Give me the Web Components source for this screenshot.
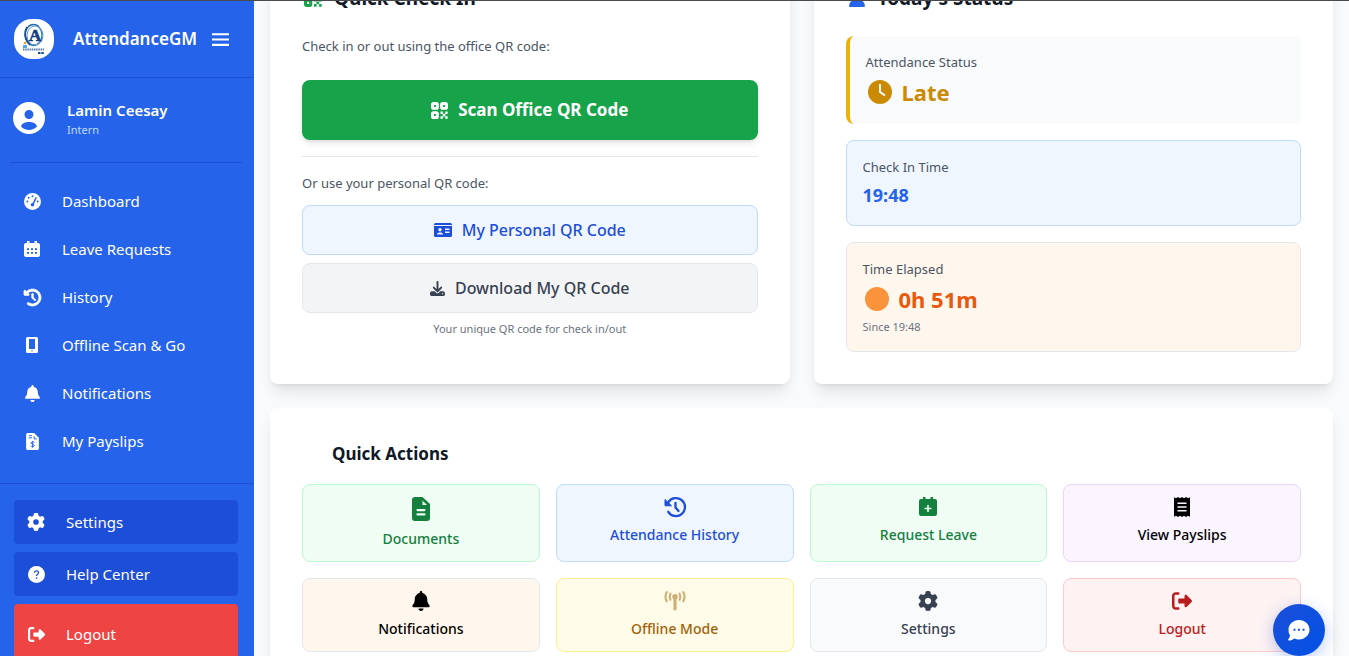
<!DOCTYPE html>
<html lang="en">
<head>
<meta charset="utf-8">
<title>AttendanceGM</title>
<style>
html,body{margin:0;height:100%}
body{box-sizing:border-box;border-top:1px solid #4a4a4d;background:#f9fafb;font-family:"Noto Sans","Open Sans",sans-serif;font-size:13px;line-height:20px;color:#4b5563;overflow:hidden}
</style>
</head>
<body>
<attendance-app></attendance-app>
<script>
const ICONS = {
  qr: '<path fill-rule="evenodd" d="M4 0h4a4 4 0 0 1 4 4v4a4 4 0 0 1-4 4H4a4 4 0 0 1-4-4V4a4 4 0 0 1 4-4zm.500 4.500v3h3v-3zM18 0h4a4 4 0 0 1 4 4v4a4 4 0 0 1-4 4h-4a4 4 0 0 1-4-4V4a4 4 0 0 1 4-4zm.500 4.500v3h3v-3zM4 14h4a4 4 0 0 1 4 4v4a4 4 0 0 1-4 4H4a4 4 0 0 1-4-4v-4a4 4 0 0 1 4-4zm.500 4.500v3h3v-3zM14.500 14.500h3.700v3.700h-3.700zM21.800 14.500h3.700v3.700h-3.700zM18 18h4v4h-4zM14.500 21.800h3.700v3.700h-3.700zM21.800 21.800h3.700v3.700h-3.700z"/>|0 0 26 26',
  user: '<path d="M224 256a128 128 0 1 0 0-256 128 128 0 1 0 0 256zm-45.700 48C79.800 304 0 383.800 0 482.300 0 498.700 13.300 512 29.700 512h388.600c16.400 0 29.700-13.300 29.700-29.700C448 383.800 368.200 304 269.700 304z"/>|0 0 448 512',
  avatar: '<path fill-rule="evenodd" d="M16 0a16 16 0 1 1 0 32 16 16 0 0 1 0-32zm0 8a4 4 0 1 0 0 9 4 4 0 0 0 0-9zM8 24.500C10 26.500 13 28 16 28s6-1.500 8-3.500C23 21 19.500 20 16 20s-7 1-8 4.500z"/>|0 0 32 32',
  menu: '<path d="M0 2h16v2H0zM0 7h16v2H0zM0 12h16v2H0z"/>|0 0 16 16',
  gauge: '<circle cx="9" cy="9" r="9"/><g fill="#2563eb"><circle cx="9" cy="3.500" r="1"/><circle cx="5" cy="5" r="1"/><circle cx="3.500" cy="9" r="1"/><circle cx="14.500" cy="9" r="1"/><circle cx="9" cy="12.500" r="1.900"/><path d="M12.500 4.300l1.200.6-3.800 8-1.600-.8z"/></g>|0 0 18 18',
  calendar: '<path fill-rule="evenodd" d="M3 0h2.500v2h5V0H13v2h1a2 2 0 0 1 2 2v10a2 2 0 0 1-2 2H2a2 2 0 0 1-2-2V4a2 2 0 0 1 2-2h1zM3 7.300v1.700h2V7.300zm4 0v1.700h2V7.300zm4 0v1.700h2V7.300zM3 11v1.700h2V11zm4 0v1.700h2V11zm4 0v1.700h2V11z"/>|0 0 16 16',
  history: '<path stroke="currentColor" stroke-width="22" d="M75 75L41 41C25.900 25.900 0 36.600 0 57.900V168c0 13.300 10.700 24 24 24h110.100c21.400 0 32.100-25.900 17-41l-30.800-30.800C155 85.500 203 64 256 64c106 0 192 86 192 192s-86 192-192 192c-40.800 0-78.600-12.700-109.700-34.400c-14.500-10.100-34.400-6.600-44.600 7.900s-6.600 34.400 7.900 44.600C151.200 495 201.700 512 256 512c141.400 0 256-114.600 256-256S397.400 0 256 0C185.300 0 121.300 28.700 75 75zm181 53c-13.300 0-24 10.700-24 24v104c0 6.400 2.500 12.500 7 17l72 72c9.400 9.400 24.600 9.400 33.900 0s9.400-24.600 0-33.900l-65-65V152c0-13.300-10.700-24-24-24z"/>|0 0 512 512',
  historyThin: '<g fill="none" stroke="currentColor" stroke-width="2.300" stroke-linecap="round"><path d="M3.200 5.500A9 9 0 1 1 3.300 14.800"/><path d="M10.500 5.800v4.700l3 3.500"/></g><path d="M0 2.500v6.300h6.500z" stroke="currentColor" stroke-linejoin="round"/>|0 0 20 20',
  mobile: '<path fill-rule="evenodd" d="M3.500 0h9A1.500 1.500 0 0 1 14 1.500v13a1.500 1.500 0 0 1-1.500 1.500h-9A1.500 1.500 0 0 1 2 14.500v-13A1.500 1.500 0 0 1 3.500 0zM5 2v10h6V2zM7.500 13v1.500h1V13z"/>|0 0 16 16',
  bell: '<path d="M224 0c-17.700 0-32 14.300-32 32v19.200C119 66 64 130.600 64 208v18.800c0 47-17.300 92.400-48.500 127.600l-7.400 8.300c-8.400 9.400-10.400 22.900-5.300 34.400S19.400 416 32 416h384c12.600 0 24-7.400 29.200-18.900s3.100-25-5.300-34.400l-7.400-8.300C401.300 319.200 384 273.900 384 226.800V208c0-77.400-55-142-128-156.800V32c0-17.700-14.300-32-32-32zm45.300 493.300c12-12 18.700-28.300 18.700-45.300H160c0 17 6.700 33.300 18.700 45.300S207 512 224 512s33.300-6.700 45.300-18.700z"/>|0 0 448 512',
  invoice: '<path d="M3.500 0H9.500L14 4.500v10a1.500 1.500 0 0 1-1.500 1.500h-9A1.500 1.500 0 0 1 2 14.500v-13A1.500 1.500 0 0 1 3.500 0z"/><g stroke="#2563eb" fill="none"><path d="M4.500 2.500h3M4.500 4.500h3M9.500 3v2.500h2.500" stroke-width=".9"/><path d="M9.800 8.900C9 8.200 6.500 8.100 6.500 9.500s3.200 1 3.200 2.300-2.500 1.300-3.400.5M8.100 7.600v6.200" stroke-width=".9"/></g>|0 0 16 16',
  gear: '<path d="M495.900 166.600c3.200 8.700 .5 18.400-6.400 24.600l-43.300 39.400c1.100 8.300 1.700 16.800 1.700 25.400s-.6 17.100-1.700 25.400l43.300 39.400c6.900 6.200 9.600 15.900 6.400 24.600c-4.400 11.900-9.700 23.300-15.800 34.300l-4.700 8.100c-6.600 11-14 21.400-22.100 31.200c-5.900 7.200-15.700 9.600-24.500 6.800l-55.700-17.700c-13.400 10.300-28.200 18.900-44 25.400l-12.500 57.100c-2 9.100-9 16.300-18.200 17.800c-13.800 2.300-28 3.500-42.500 3.500s-28.700-1.200-42.500-3.500c-9.200-1.500-16.200-8.700-18.200-17.800l-12.500-57.100c-15.800-6.500-30.600-15.100-44-25.400L83.100 425.900c-8.800 2.800-18.600 .3-24.500-6.800c-8.100-9.800-15.500-20.200-22.100-31.200l-4.700-8.100c-6.100-11-11.400-22.400-15.800-34.300c-3.200-8.700-.5-18.400 6.400-24.600l43.300-39.400C64.600 273.100 64 264.600 64 256s.6-17.100 1.700-25.400L22.400 191.200c-6.900-6.200-9.600-15.900-6.400-24.600c4.400-11.900 9.700-23.300 15.800-34.300l4.700-8.100c6.600-11 14-21.400 22.100-31.200c5.900-7.200 15.700-9.600 24.500-6.800l55.700 17.700c13.400-10.300 28.200-18.900 44-25.400l12.500-57.100c2-9.100 9-16.300 18.200-17.800C227.300 1.200 241.500 0 256 0s28.700 1.200 42.500 3.500c9.200 1.500 16.200 8.700 18.200 17.800l12.500 57.100c15.800 6.500 30.600 15.100 44 25.400l55.700-17.700c8.800-2.800 18.600-.3 24.500 6.800c8.100 9.800 15.500 20.200 22.100 31.200l4.700 8.100c6.100 11 11.400 22.400 15.800 34.300zM256 336a80 80 0 1 0 0-160 80 80 0 1 0 0 160z"/>|0 0 512 512',
  help: '<circle cx="9" cy="9" r="9"/><path d="M6.800 7.200C6.900 4.500 11.200 4.600 11.200 7c0 1.700-2.200 1.600-2.200 3.500" fill="none" stroke="#1d4ed8" stroke-width="1.300"/><circle cx="9" cy="12.700" r=".9" fill="#1d4ed8"/>|0 0 18 18',
  logout: '<path d="M377.900 105.900L500.700 228.700c7.200 7.200 11.300 17.100 11.300 27.300s-4.100 20.100-11.300 27.300L377.900 406.100c-6.400 6.400-15 9.900-24 9.900c-18.700 0-33.900-15.200-33.900-33.900V320H192c-17.700 0-32-14.300-32-32v-64c0-17.700 14.300-32 32-32h128v-62.100c0-18.700 15.200-33.900 33.900-33.900c9 0 17.600 3.600 24 9.900zM160 96H96c-17.700 0-32 14.300-32 32v256c0 17.700 14.300 32 32 32h64c17.700 0 32 14.300 32 32s-14.300 32-32 32H96c-53 0-96-43-96-96V128C0 75 43 32 96 32h64c17.700 0 32 14.300 32 32s-14.300 32-32 32z"/>|0 0 512 512',
  idcard: '<path fill-rule="evenodd" d="M1.500 0h15A1.500 1.500 0 0 1 18 1.500V2H0v-.5A1.500 1.500 0 0 1 1.500 0zM0 3h18v9.500a1.500 1.500 0 0 1-1.500 1.500h-15A1.500 1.500 0 0 1 0 12.500zm6 2a1.700 1.700 0 1 0 0 3.400A1.700 1.700 0 0 0 6 5zM3 11.600h6C9 9.800 7.500 9.400 6 9.400s-3 .4-3 2.200zM11 5.500V7h4.500V5.500zm0 3V10h4.500V8.500z"/>|0 0 18 14',
  download: '<path fill-rule="evenodd" d="M288 32c0-17.700-14.300-32-32-32s-32 14.300-32 32v242.700l-73.400-73.400c-12.500-12.500-32.800-12.500-45.300 0s-12.500 32.800 0 45.300l128 128c12.500 12.500 32.800 12.500 45.300 0l128-128c12.500-12.500 12.500-32.800 0-45.300s-32.800-12.500-45.300 0L288 274.700V32zM64 352c-35.300 0-64 28.700-64 64v32c0 35.300 28.700 64 64 64h384c35.300 0 64-28.700 64-64v-32c0-35.300-28.700-64-64-64H346.500l-45.300 45.300c-25 25-65.500 25-90.500 0L165.500 352H64zm368 56a24 24 0 1 1 0 48 24 24 0 1 1 0-48z"/>|0 0 512 512',
  clock: '<path fill-rule="evenodd" d="M12 0a12 12 0 1 1 0 24 12 12 0 0 1 0-24zm-1 5v7.500l5 3.500c1 .4 2-.8 1-1.700l-4-2.800V5c0-1.300-2-1.300-2 0z"/>|0 0 24 24',
  dot: '<circle cx="12" cy="12" r="12"/>|0 0 24 24',
  doc: '<path fill-rule="evenodd" d="M3 0h7.500L18 7v14a3 3 0 0 1-3 3H3a3 3 0 0 1-3-3V3a3 3 0 0 1 3-3zm7.500 3.500V8H15zM5.500 12a1 1 0 0 0 0 2.200h7a1 1 0 0 0 0-2.200zm0 4.300a1 1 0 0 0 0 2.200h7a1 1 0 0 0 0-2.200z"/>|0 0 18 24',
  calplus: '<path fill-rule="evenodd" d="M4 0h2.500v2h5V0H14v2h2a2 2 0 0 1 2 2v13a2 2 0 0 1-2 2H2a2 2 0 0 1-2-2V4a2 2 0 0 1 2-2h2zM8.200 8v2.700H5.500v1.500h2.700v2.700h1.600v-2.700h2.700v-1.500H9.800V8z"/>|0 0 18 20',
  receipt: '<path fill-rule="evenodd" d="M0 .3l2 1L4 0l2 1.300L8 0l2 1.300L12 0l2 1.300 2-1v19.400l-2-1L12 20l-2-1.300L8 20l-2-1.300L4 20l-2-1.300-2 1zM3.500 5.500V7h9V5.500zm0 3.700v1.600h9V9.200zm0 3.800v1.500h9V13z"/>|0 0 16 20',
  tower: '<circle cx="11" cy="6" r="2.900"/><path d="M9.400 6h3.200v13a1.600 1.600 0 0 1-3.200 0z"/><g fill="none" stroke="currentColor" stroke-width="2.200" stroke-linecap="round"><path d="M2.300 1.200Q-.2 6 2.300 10.800M19.700 1.200Q22.200 6 19.700 10.800M6.200 2.800Q4.700 6 6.200 9.200M15.800 2.800Q17.300 6 15.800 9.200"/></g>|0 0 22 21',
  chat: '<path fill-rule="evenodd" d="M11 0c5.800 0 10.500 4.300 10.500 9.700S16.800 19.400 11 19.400c-1.700 0-3.300-.4-4.700-1C4.800 19.600 2.800 20.500.8 20.500c-.8 0-1-.7-.5-1.200 1-1 1.700-2.700 1.700-4A9.300 9.300 0 0 1 .5 9.700C.5 4.300 5.200 0 11 0zM5.500 8.700v2h2v-2zm4.500 0v2h2v-2zm4.500 0v2h2v-2z"/>|0 0 22 21'
};

class Base extends HTMLElement {
  connectedCallback() {
    if (this.shadowRoot) return;
    this.attachShadow({mode: 'open'}).innerHTML = '<style>*{box-sizing:border-box}:host{display:block;box-sizing:border-box}' + this.css() + '</style>' + this.html();
  }
  a(name, fallback = '') { return this.getAttribute(name) || fallback; }
}

customElements.define('app-icon', class extends Base {
  css() {
    const w = this.a('w', '17'), h = this.a('h', w);
    return `:host{display:block;flex:none}svg{display:block;width:${w}px;height:${h}px;fill:currentColor;overflow:visible}`;
  }
  html() {
    const [body, box] = ICONS[this.a('name')].split('|');
    return `<svg viewBox="${box}" aria-hidden="true">${body}</svg>`;
  }
});

customElements.define('brand-logo', class extends Base {
  css() { return `:host{flex:none}svg{display:block;width:40px;height:40px}text{font-family:"Liberation Serif",serif;font-weight:700;fill:#123f7f;stroke:#123f7f;stroke-width:.6}`; }
  html() {
    return `<svg viewBox="0 0 40 40" role="img" aria-label="AttendanceGM logo"><rect width="40" height="40" rx="18" fill="#fff"/>
      <ellipse cx="19.500" cy="16" rx="8.500" ry="10.500" fill="none" stroke="#2b6cb0" stroke-width="1.300"/>
      <ellipse cx="21" cy="16.500" rx="8" ry="9.500" fill="none" stroke="#5a9bd5" stroke-width="1"/>
      <path d="M13 8Q8 17 16 26" fill="none" stroke="#1c4f8f" stroke-width="1.800"/>
      <text x="15" y="22" font-size="17">A</text>
      <circle cx="11" cy="24" r="1.300" fill="#f0a030"/><path d="M9 26h4v3H9z" fill="#5aa7d8"/>
      <path d="M9 30.500h21" stroke="#1c4f8f" stroke-width="1.800" stroke-dasharray="1.500 .7" opacity=".75"/>
      <path d="M24 34h6" stroke="#1c4f8f" stroke-width="2" stroke-dasharray="2.500 .8"/></svg>`;
  }
});

customElements.define('nav-item', class extends Base {
  css() {
    return `a{display:flex;align-items:center;gap:20px;height:48px;padding-left:22px;color:#fff;text-decoration:none;font-size:15px;line-height:24px}
      span{width:20px;display:flex;justify-content:center}
      :host([boxed]) a{height:44px;padding-left:12px;background:#1d4ed8;border-radius:4px}
      :host([danger]) a{height:60px;background:#ef4444}`;
  }
  html() { return `<a href="#"><span><app-icon name="${this.a('icon')}" w="${this.a('w', '17')}"></app-icon></span><slot></slot></a>`; }
});

customElements.define('app-sidebar', class extends Base {
  css() {
    return `:host{flex:none;width:254px;background:#2563eb;color:#fff}
      header{display:flex;align-items:center;height:77px;padding-left:14px;border-bottom:1px solid #1d4ed8}
      h1{margin:0 0 0 19px;font-size:17px;line-height:28px;font-weight:600}
      button{margin:0 0 0 15px;padding:0;border:0;background:none;color:inherit}
      .me{display:flex;align-items:center;gap:22px;margin:0 12px 0 10px;padding:20px 0 24px 3px;border-bottom:1px solid #1d4ed8}
      .me b{display:block;font-size:15px;line-height:24px;font-weight:600}
      .me small{display:block;font-size:11px;line-height:16px;color:#bfdbfe}
      nav{padding:14px 0 18px}
      footer{display:grid;gap:8px;padding:16px 16px 16px 14px;border-top:1px solid #1d4ed8}`;
  }
  html() {
    return `<header><brand-logo></brand-logo><h1>AttendanceGM</h1><button aria-label="Toggle menu"><app-icon name="menu" w="17"></app-icon></button></header>
      <div class="me"><app-icon name="avatar" w="32"></app-icon><div><b>Lamin Ceesay</b><small>Intern</small></div></div>
      <nav><nav-item icon="gauge">Dashboard</nav-item><nav-item icon="calendar" w="16">Leave Requests</nav-item><nav-item icon="history">History</nav-item>
      <nav-item icon="mobile" w="16">Offline Scan &amp; Go</nav-item><nav-item icon="bell" w="17">Notifications</nav-item><nav-item icon="invoice" w="17">My Payslips</nav-item></nav>
      <footer><nav-item boxed icon="gear" w="18">Settings</nav-item><nav-item boxed icon="help">Help Center</nav-item><nav-item boxed danger icon="logout">Logout</nav-item></footer>`;
  }
});

customElements.define('panel-card', class extends Base {
  css() {
    return `:host{background:#fff;border-radius:8px;padding:32px;box-shadow:0 10px 15px -3px rgba(0,0,0,.1),0 4px 6px -4px rgba(0,0,0,.1)}
      h2{display:flex;align-items:center;gap:12px;margin:0 0 24px;padding-left:2px;font-size:19px;line-height:28px;font-weight:700;color:#111827}
      :host([plain]) h2{margin-bottom:16px;padding-left:30px;font-size:17px}`;
  }
  html() {
    const i = this.a('icon');
    return `<h2>${i ? `<app-icon name="${i}" w="18" style="color:${this.a('tint')}"></app-icon>` : ''}${this.a('heading')}</h2><slot></slot>`;
  }
});

customElements.define('wide-button', class extends Base {
  css() {
    return `button{display:flex;align-items:center;justify-content:center;gap:10px;width:100%;height:50px;padding:0;border:1px solid #e5e7eb;border-radius:8px;background:#f3f4f6;color:#374151;font:500 16px/24px "Noto Sans",sans-serif}
      :host([kind=blue]) button{background:#eff6ff;border-color:#bfdbfe;color:#1d4ed8}
      :host([kind=green]) button{height:60px;border:0;background:#16a34a;color:#fff;font-size:17px;font-weight:700;box-shadow:0 4px 6px -1px rgba(0,0,0,.1),0 2px 4px -2px rgba(0,0,0,.1)}`;
  }
  html() { return `<button><app-icon name="${this.a('icon')}" w="${this.a('w')}" h="${this.a('h', this.a('w'))}"></app-icon><slot></slot></button>`; }
});

customElements.define('check-in-panel', class extends Base {
  css() {
    return `p{margin:0}.a{margin-bottom:24px}.more{margin-top:16px;padding-top:16px;border-top:1px solid #e5e7eb}.more p{margin-bottom:12px}
      .list{display:grid;gap:8px}.more .note{margin:0;text-align:center;font-size:11px;line-height:16px;color:#6b7280}`;
  }
  html() {
    return `<p class="a">Check in or out using the office QR code:</p><wide-button kind="green" icon="qr" w="17">Scan Office QR Code</wide-button>
      <div class="more"><p>Or use your personal QR code:</p><div class="list"><wide-button kind="blue" icon="idcard" w="18" h="14">My Personal QR Code</wide-button>
      <wide-button icon="download" w="15">Download My QR Code</wide-button><p class="note">Your unique QR code for check in/out</p></div></div>`;
  }
});

customElements.define('status-tile', class extends Base {
  css() {
    return `:host{padding:16px;border:1px solid #bfdbfe;border-radius:8px;background:#eff6ff}
      .v{display:flex;align-items:center;gap:10px;margin-top:4px;font-size:18px;line-height:28px;font-weight:700;color:#2563eb}
      :host([kind=late]){border:0;border-left:4px solid #eab308;background:#f9fafb}
      :host([kind=elapsed]){border-color:#e5e7eb;background:#fff7ed}
      :host([kind]) .v{padding-left:2px;font-size:22px;line-height:32px}
      :host([kind=late]) .v{color:#ca8a04}:host([kind=elapsed]) .v{color:#ea580c}
      small{display:block;margin-top:4px;font-size:11px;line-height:16px;color:#6b7280}`;
  }
  html() {
    const i = this.a('icon'), n = this.a('note');
    return `<div>${this.a('label')}</div><div class="v">${i ? `<app-icon name="${i}" w="24"${i === 'dot' ? ' style="color:#fb923c"' : ''}></app-icon>` : ''}<slot></slot></div>${n ? `<small>${n}</small>` : ''}`;
  }
});

customElements.define('action-tile', class extends Base {
  css() {
    return `:host{display:grid}a{display:flex;flex-direction:column;align-items:center;gap:8px;padding:12px;border:1px solid ${this.a('line', '#e5e7eb')};border-radius:8px;background:${this.a('fill')};color:${this.a('ink', '#000')};font-size:14px;font-weight:500;line-height:20px;text-decoration:none}
      :host([faded]) app-icon{opacity:.5}`;
  }
  html() { return `<a href="#"><app-icon name="${this.a('icon')}" w="22" h="${this.a('h', '20')}"></app-icon><slot></slot></a>`; }
});

customElements.define('chat-button', class extends Base {
  css() {
    return `:host{position:fixed;right:24px;bottom:0}
      button{display:grid;place-items:center;width:52px;height:52px;padding:0;border:0;border-radius:50%;color:#fff;background:linear-gradient(135deg,#1d4ed8,#0052e6);box-shadow:0 4px 16px rgba(29,78,216,.3)}`;
  }
  html() { return `<button aria-label="Open chat"><app-icon name="chat" w="22" h="21"></app-icon></button>`; }
});

customElements.define('attendance-app', class extends Base {
  css() {
    return `:host{display:flex;height:100%;overflow:hidden}
      main{flex:1;min-width:0;padding:0 16px;display:flow-root}
      .row{display:grid;grid-template-columns:1fr 1fr;gap:24px;margin:-49px 0 24px}
      .stack{display:grid;gap:16px}
      .acts{display:grid;grid-template-columns:repeat(4,1fr);gap:16px}`;
  }
  html() {
    return `<app-sidebar></app-sidebar><main><div class="row">
      <panel-card heading="Quick Check In" icon="qr" tint="#16a34a"><check-in-panel></check-in-panel></panel-card>
      <panel-card heading="Today's Status" icon="user" tint="#2563eb"><div class="stack">
        <status-tile kind="late" label="Attendance Status" icon="clock">Late</status-tile>
        <status-tile label="Check In Time">19:48</status-tile>
        <status-tile kind="elapsed" label="Time Elapsed" icon="dot" note="Since 19:48">0h 51m</status-tile></div></panel-card></div>
      <panel-card plain heading="Quick Actions"><div class="acts">
        <action-tile icon="doc" h="24" fill="#f0fdf4" line="#bbf7d0" ink="#15803d">Documents</action-tile>
        <action-tile icon="historyThin" fill="#eff6ff" line="#bfdbfe" ink="#1d4ed8">Attendance History</action-tile>
        <action-tile icon="calplus" fill="#f0fdf4" line="#bbf7d0" ink="#15803d">Request Leave</action-tile>
        <action-tile icon="receipt" fill="#faf5ff" line="#e9d5ff">View Payslips</action-tile>
        <action-tile icon="bell" fill="#fff7ed">Notifications</action-tile>
        <action-tile icon="tower" faded fill="#fefce8" line="#fef08a" ink="#a16207">Offline Mode</action-tile>
        <action-tile icon="gear" fill="#f9fafb" ink="#374151">Settings</action-tile>
        <action-tile icon="logout" fill="#fef2f2" line="#fecaca" ink="#b91c1c">Logout</action-tile>
      </div></panel-card></main><chat-button></chat-button>`;
  }
});
</script>
</body>
</html>
